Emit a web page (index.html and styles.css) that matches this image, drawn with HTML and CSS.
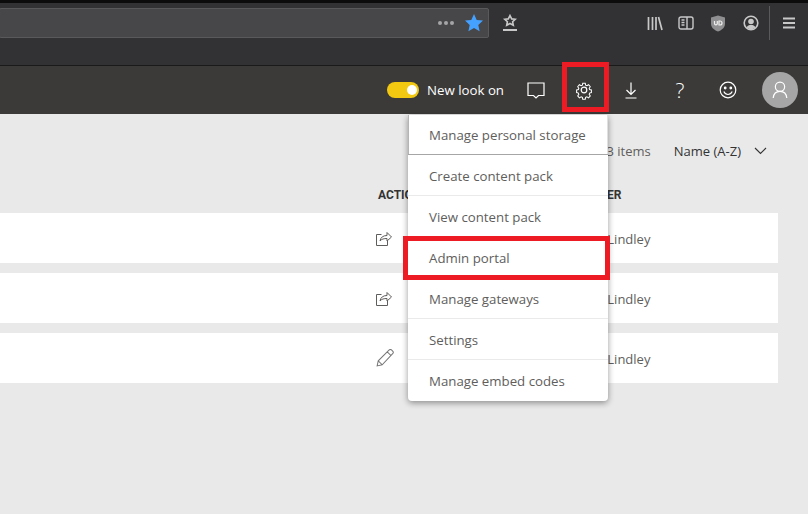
FILE: index.html
```html
<!DOCTYPE html>
<html lang="en">

<head>
    <meta charset="UTF-8">
    <title>Power BI</title>
    <link rel="stylesheet" href="styles.css">
</head>

<body>
    <div class="browser">
        <div class="address-bar">
            <span class="dots"><i></i><i></i><i></i></span>
            <svg class="star" width="20" height="20" viewBox="0 0 20 20"><path fill="#45a1ff" d="M10 1l2.700 5.900 6.300.7-4.700 4.300 1.300 6.300L10 15l-5.600 3.200 1.300-6.300L1 7.600l6.300-.7z"/></svg>
        </div>
        <svg class="pocket" width="16" height="18" viewBox="0 0 16 18" fill="none" stroke="#c8c8c9" stroke-width="1.600"><path d="M8 1.500l1.700 3.400 3.500.4-2.600 2.400.7 3.500L8 9.500l-3.300 1.700.7-3.500-2.600-2.400 3.500-.4z"/><path d="M1 16h14" stroke-width="2"/></svg>
        <div class="browser-tools">
            <svg width="16" height="16" viewBox="0 0 16 16" fill="none" stroke="#c8c8c9" stroke-width="1.700"><path d="M1.500 2v13M5.500 2v13M9 2v13M11.500 2l3.500 13"/></svg>
            <svg class="tool-sidebar" width="16" height="14" viewBox="0 0 16 14" fill="none" stroke="#c8c8c9" stroke-width="1.400"><rect x="1" y="1" width="14" height="12" rx="2"/><path d="M9 1v12M3.500 4h3M3.500 6.500h3M3.500 9h3"/></svg>
            <svg width="16" height="17" viewBox="0 0 16 17"><path fill="#8f8f91" d="M8 .5l7 2v6c0 4-3 6.500-7 8-4-1.500-7-4-7-8v-6z"/><path fill="none" stroke="#eee" stroke-width="1.200" d="M4.500 6v2.500a1.400 1.400 0 0 0 2.800 0V6M9 6v4h1a2 2 0 0 0 0-4z"/></svg>
            <svg class="tool-account" width="16" height="16" viewBox="0 0 16 16"><circle cx="8" cy="8" r="6.800" fill="none" stroke="#c8c8c9" stroke-width="1.600"/><circle cx="8" cy="6.500" r="2.800" fill="#c8c8c9"/><path fill="#c8c8c9" d="M3.500 12.500c1-2 2.500-2.500 4.500-2.500s3.500.5 4.500 2.500L8 15z"/></svg>
            <span class="separator"></span>
            <svg width="14" height="12" viewBox="0 0 14 12" stroke="#c8c8c9" stroke-width="1.800"><path d="M1 1.500h12M1 6h12M1 10.500h12"/></svg>
        </div>
    </div>

    <header class="app-header">
        <span class="toggle"><span class="knob"></span></span>
        <span class="toggle-label">New look on</span>
        <svg class="header-icon icon-comment" width="20" height="20" viewBox="0 0 20 20" fill="none" stroke="#fff" stroke-width="1.200"><path d="M2 3h16v12.500h-5.500l-2.500 2.500-2.500-2.500H2z"/></svg>
        <svg class="header-icon" width="20" height="20" viewBox="0 0 20 20" fill="none" stroke="#fff" stroke-width="1.200"><circle cx="10" cy="10" r="2.800"/><path d="M8.500 2h3l.4 2.300 1.500.7 2-1.200 2 2.300-1.300 1.800.5 1.500 2.100.6v3l-2.100.6-.5 1.500 1.300 1.800-2 2.300-2-1.200-1.500.7-.4 2.300h-3l-.4-2.300-1.500-.7-2 1.200-2-2.300 1.300-1.800-.5-1.500-2.100-.6v-3l2.100-.6.5-1.500-1.300-1.800 2-2.300 2 1.200 1.500-.7z" transform="translate(1.500 1.500) scale(.85)"/></svg>
        <svg class="header-icon icon-download" width="20" height="20" viewBox="0 0 20 20" fill="none" stroke="#fff" stroke-width="1.200"><path d="M10 2.500v12M5.500 10l4.500 4.500 4.500-4.500M4.500 18h11"/></svg>
        <span class="help">?</span>
        <svg class="header-icon icon-smile" width="20" height="20" viewBox="0 0 20 20" fill="none" stroke="#fff" stroke-width="1.200"><circle cx="10" cy="10" r="7.800"/><circle cx="7.200" cy="8" r=".8" fill="#fff"/><circle cx="12.800" cy="8" r=".8" fill="#fff"/><path d="M5.800 11.500c1 2 2.500 3 4.200 3s3.200-1 4.200-3"/></svg>
        <span class="avatar">
            <svg width="16" height="18" viewBox="0 0 20 22" fill="none" stroke="#fff" stroke-width="1.500"><circle cx="10" cy="7" r="5.800"/><path d="M1.500 21c.5-5 4-8.200 8.500-8.200s8 3.200 8.500 8.200"/></svg>
        </span>
    </header>

    <main class="content">
        <div class="list-meta">
            <span class="count">3 items</span>
            <span class="sort">Name (A-Z)</span>
            <svg width="13" height="8" viewBox="0 0 13 8" fill="none" stroke="#333" stroke-width="1.100"><path d="M1 1l5.500 5.500L12 1"/></svg>
        </div>
        <div class="table-head">
            <span class="col-actions">ACTIONS</span>
            <span class="col-owner">OWNER</span>
        </div>
        <div class="row">
            <svg class="row-icon" width="16" height="15" viewBox="0 0 16 15" fill="none" stroke="#605e5c" stroke-width="1"><path d="M5.500 3.500H.5v11h11V10"/><path d="M4 10c.5-3.500 3-5.500 7-5.500V1.500l4.500 4.500L11 10V7.500C8 7.500 5.500 8 4 10z"/></svg>
            <span class="owner">Chris Lindley</span>
        </div>
        <div class="row">
            <svg class="row-icon" width="16" height="15" viewBox="0 0 16 15" fill="none" stroke="#605e5c" stroke-width="1"><path d="M5.500 3.500H.5v11h11V10"/><path d="M4 10c.5-3.500 3-5.500 7-5.500V1.500l4.500 4.500L11 10V7.500C8 7.500 5.500 8 4 10z"/></svg>
            <span class="owner">Chris Lindley</span>
        </div>
        <div class="row">
            <svg class="row-icon" width="18" height="18" viewBox="0 0 16 16" fill="none" stroke="#777" stroke-width=".9"><path d="M1 15l1-4.500L11.500 1c.8-.7 1.800-.7 2.500 0l.8.800c.7.700.7 1.700 0 2.400L5.500 14zM2 10.500L5.500 14M10 2.500l3.500 3.500"/></svg>
            <span class="owner owner-short">Chris Lindley</span>
        </div>
    </main>

    <ul class="menu">
        <li class="menu-first">Manage personal storage</li>
        <li>Create content pack</li>
        <li>View content pack</li>
        <li>Admin portal</li>
        <li>Manage gateways</li>
        <li>Settings</li>
        <li>Manage embed codes</li>
    </ul>

    <div class="mark mark-gear"></div>
    <div class="mark mark-admin"></div>
</body>

</html>
```
FILE: styles.css
```css
html,
body {
    margin: 0;
    height: 514px;
    overflow: hidden;
}

body {
    font-family: "Open Sans", sans-serif;
    background-color: #e9e9e9;
    color: #605e5c;
    position: relative;
}

.browser {
    height: 62px;
    border-top: 3px solid #0c0c0d;
    background-color: #323234;
    display: flex;
    align-items: flex-start;
    border-bottom: 1px solid #1a1a1a;
}

.address-bar {
    width: 490px;
    height: 30px;
    margin-top: 5px;
    margin-left: -1px;
    box-sizing: border-box;
    background-color: #474749;
    border: 1px solid #59595b;
    border-radius: 2px;
    display: flex;
    align-items: center;
    justify-content: flex-end;
    padding-right: 4px;
}

.dots {
    display: flex;
    gap: 2px;
    margin-right: 10px;
}

.dots i {
    width: 4px;
    height: 4px;
    border-radius: 50%;
    background-color: #a5a5a7;
}

.pocket {
    margin: 11px 0 0 13px;
}

.browser-tools {
    margin-left: auto;
    margin-right: 12px;
    margin-top: 3px;
    height: 34px;
    display: flex;
    align-items: center;
    gap: 16px;
}

.tool-sidebar {
    margin-left: -1px;
}

.tool-account {
    margin-left: 1px;
}

.separator {
    width: 1px;
    height: 34px;
    background-color: #5a5a5c;
    margin: 0 -4px 0 -6px;
}

.app-header {
    height: 48px;
    background-color: #3b3a39;
    display: flex;
    align-items: center;
    justify-content: flex-end;
    color: #fff;
    padding-right: 10px;
}

.toggle {
    width: 32px;
    height: 16px;
    border-radius: 8px;
    background-color: #f2c811;
    display: flex;
    align-items: center;
    justify-content: flex-end;
    margin-right: 8px;
}

.knob {
    width: 10px;
    height: 10px;
    border-radius: 50%;
    background-color: #fff;
    margin-right: 2px;
}

.toggle-label {
    font-size: 13.25px;
    margin-right: 22px;
}

.header-icon {
    margin-right: 27px;
}

.icon-comment {
    margin-right: 28px;
}

.icon-download {
    margin-right: 33px;
}

.icon-smile {
    margin-right: 25px;
}

.help {
    font-size: 21px;
    font-weight: 300;
    width: 12px;
    text-align: center;
    margin-right: 32px;
}

.avatar {
    width: 36px;
    height: 36px;
    border-radius: 50%;
    background-color: #a6a6a6;
    display: flex;
    align-items: center;
    justify-content: center;
    margin-left: -1px;
}

.content {
    padding-right: 30px;
}

.list-meta {
    height: 74px;
    display: flex;
    align-items: center;
    justify-content: flex-end;
    font-size: 13px;
    padding-right: 11px;
}

.count {
    margin-right: 23px;
}

.sort {
    color: #333;
    margin-right: 13px;
}

.table-head {
    height: 25px;
    font-family: "Roboto", sans-serif;
    font-size: 12px;
    font-weight: 700;
    color: #333;
    display: flex;
    align-items: flex-start;
}

.col-actions {
    margin-left: 378px;
}

.col-owner {
    margin-left: 151px;
}

.row {
    height: 50px;
    margin-bottom: 10px;
    background-color: #fff;
    display: flex;
    align-items: center;
    font-size: 13px;
}

.row-icon {
    margin-left: 376px;
}

.owner {
    margin-left: 181px;
    padding-top: 2px;
}

.owner-short {
    margin-left: 179px;
}

.menu {
    position: absolute;
    left: 408px;
    top: 115px;
    width: 200px;
    margin: 0;
    padding: 0;
    list-style-type: none;
    background-color: #fff;
    border-radius: 0 0 4px 4px;
    box-shadow: 0 2px 6px rgba(0, 0, 0, 0.4);
    font-size: 13.25px;
}

.menu li {
    height: 39px;
    line-height: 41px;
    padding: 1px 0 0 21px;
    border-bottom: 1px solid #eaeaea;
}

.menu li:last-child {
    height: 40px;
    border-bottom: none;
}

.menu .menu-first {
    height: 39px;
    line-height: 40px;
    padding-top: 0;
    border-bottom-color: #a6a6a6;
    box-shadow: inset 1px 0 #b5b5b5, inset -1px 0 #e0e0e0;
}

.mark {
    position: absolute;
    box-sizing: border-box;
    border: 5px solid #ed1c24;
}

.mark-gear {
    left: 562px;
    top: 62px;
    width: 47px;
    height: 50px;
}

.mark-admin {
    left: 403px;
    top: 236px;
    width: 207px;
    height: 44px;
}
```
